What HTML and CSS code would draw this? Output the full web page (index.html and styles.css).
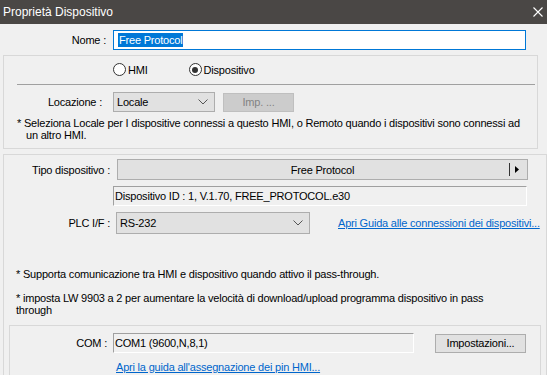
FILE: index.html
```html
<!DOCTYPE html>
<html lang="it">
<head>
  <meta charset="UTF-8">
  <title>Proprietà Dispositivo</title>
  <link rel="stylesheet" href="styles.css">
</head>
<body>
<div class="titlebar">
  <span>Proprietà Dispositivo</span>
  <svg class="close" width="10" height="10" viewBox="0 0 10 10"><path d="M0.5 0.5 L9.5 9.5 M9.5 0.5 L0.5 9.5" stroke="#fff" stroke-width="1.1"/></svg>
</div>

<div class="name-row">
  <label>Nome :</label>
  <div class="edit focus"><span class="sel">Free Protocol</span></div>
</div>

<div class="group g1">
  <div class="radios">
    <span class="radio"><i class="dot"></i>HMI</span>
    <span class="radio checked"><i class="dot"></i>Dispositivo</span>
  </div>
  <div class="sep"></div>
  <div class="row loc-row">
    <label class="loc-label">Locazione :</label>
    <div class="combo loc-combo">Locale<svg class="chev" width="10" height="6" viewBox="0 0 10 6"><path d="M0.5 0.5 L5 5 L9.5 0.5" fill="none" stroke="#555"/></svg></div>
    <div class="btn disabled">Imp. ...</div>
  </div>
  <p class="note">* Seleziona Locale per I dispositive connessi a questo HMI, o Remoto quando i dispositivi sono connessi ad<br><span class="indent">un altro HMI.</span></p>
</div>

<div class="group g2">
  <div class="row tipo-row">
    <label>Tipo dispositivo :</label>
    <div class="btn tipo">Free Protocol<span class="tsep"></span><svg class="arrow" width="4" height="7" viewBox="0 0 4 7"><path d="M0 0 L4 3.5 L0 7 Z" fill="#000"/></svg></div>
  </div>
  <div class="row id-row">
    <div class="edit readonly wide">Dispositivo ID : 1, V.1.70, FREE_PROTOCOL.e30</div>
  </div>
  <div class="row plc-row">
    <label>PLC I/F :</label>
    <div class="combo plc-combo">RS-232<svg class="chev" width="10" height="6" viewBox="0 0 10 6"><path d="M0.5 0.5 L5 5 L9.5 0.5" fill="none" stroke="#555"/></svg></div>
    <a class="link" href="#">Apri Guida alle connessioni dei dispositivi...</a>
  </div>
  <p class="note n1">* Supporta comunicazione tra HMI e dispositivo quando attivo il pass-through.</p>
  <p class="note n2">* imposta LW 9903 a 2 per aumentare la velocità di download/upload programma dispositivo in pass<br>through</p>

  <div class="group g3">
    <div class="row com-row">
      <label>COM :</label>
      <div class="edit readonly com">COM1 (9600,N,8,1)</div>
      <div class="btn imp">Impostazioni...</div>
    </div>
    <a class="link pin" href="#">Apri la guida all'assegnazione dei pin HMI...</a>
  </div>
</div>
</body>
</html>
```

FILE: styles.css
```css
body {
  margin: 0;
  background: #f0f0f0;
  font-family: "Liberation Sans", Arial, sans-serif;
  font-size: 11px;
  letter-spacing: -0.2px;
  color: #000;
  overflow: hidden;
  height: 375px;
}
.titlebar {
  height: 24px;
  background: #4a4745;
  color: #fff;
  font-size: 12px;
  letter-spacing: 0;
  display: flex;
  align-items: center;
  justify-content: space-between;
  padding: 0 4px 0 3px;
}
label {
  width: 106px;
  text-align: right;
  flex-shrink: 0;
}
.row {
  display: flex;
  align-items: center;
}
.name-row {
  display: flex;
  align-items: center;
  height: 30px;
  padding-top: 1px;
}
.edit {
  box-sizing: border-box;
  height: 20px;
  display: flex;
  align-items: center;
  white-space: nowrap;
}
.edit.focus {
  margin-left: 7px;
  width: 413px;
  background: #fff;
  border: 1px solid #0078d7;
  padding-left: 4px;
}
.sel {
  background: #0078d7;
  color: #fff;
  padding: 1px 1px;
}
.edit.readonly {
  background: #f0f0f0;
  border: 1px solid;
  border-color: #a0a0a0 #fff #fff #a0a0a0;
  padding-left: 1px;
}
.group {
  border: 1px solid #d8d8d8;
  box-sizing: border-box;
}
.g1 {
  margin: 0 9px 0 3px;
  height: 94px;
}
.radios {
  display: flex;
  height: 13px;
  margin-top: 7px;
  padding-left: 109px;
}
.radio {
  display: flex;
  align-items: center;
  gap: 2px;
  margin-right: 41px;
}
.radio.checked {
  margin-right: 0;
}
.dot {
  box-sizing: border-box;
  width: 13px;
  height: 13px;
  border: 1px solid #333;
  border-radius: 50%;
  background: #fff;
  position: relative;
}
.checked .dot::after {
  content: "";
  position: absolute;
  left: 2.5px;
  top: 2.5px;
  width: 6px;
  height: 6px;
  border-radius: 50%;
  background: #333;
}
.sep {
  height: 1px;
  background: #a0a0a0;
  margin: 8px 2px 0 13px;
}
.loc-row {
  margin-top: 7px;
}
.loc-label {
  width: 98px;
}
.combo {
  box-sizing: border-box;
  height: 20px;
  background: #e1e1e1;
  border: 1px solid #adadad;
  display: flex;
  align-items: center;
  justify-content: space-between;
  padding: 0 6px 0 3px;
}
.loc-combo {
  margin-left: 11px;
  width: 102px;
}
.btn {
  box-sizing: border-box;
  height: 19px;
  background: #e1e1e1;
  border: 1px solid #adadad;
  display: flex;
  align-items: center;
  justify-content: center;
}
.btn.disabled {
  margin-left: 8px;
  width: 71px;
  background: #cccccc;
  border-color: #bfbfbf;
  color: #838383;
}
.note {
  margin: 0;
  line-height: 12px;
  white-space: nowrap;
}
.g1 .note {
  margin: 5px 0 0 13px;
}
.indent {
  display: inline-block;
  padding-left: 9px;
}
.g2 {
  margin: 5px 0 0 3px;
  border-right: 1px solid #d8d8d8;
  height: 240px;
}
.tipo-row {
  margin-top: 4px;
}
.btn.tipo {
  margin-left: 7px;
  width: 411px;
  height: 21px;
  position: relative;
}
.tsep {
  position: absolute;
  right: 17px;
  top: 3px;
  width: 1px;
  height: 13px;
  background: #333;
}
.arrow {
  position: absolute;
  right: 8px;
  top: 6px;
}
.id-row {
  margin-top: 6px;
  padding-left: 109px;
}
.wide {
  width: 414px;
}
.plc-row {
  margin-top: 6px;
}
.plc-combo {
  margin-left: 6px;
  width: 194px;
  height: 22px;
}
.link {
  color: #0066cc;
  margin-left: 28px;
  white-space: nowrap;
}
.n1 {
  margin: 34px 0 0 12px;
}
.n2 {
  margin: 12px 0 0 12px;
}
.g3 {
  margin: 9px 5px 0 5px;
  height: 60px;
  border-right: 1px solid #d8d8d8;
}
.com-row {
  margin-top: 7px;
}
.com-row label {
  width: 97px;
}
.edit.com {
  margin-left: 6px;
  width: 301px;
}
.btn.imp {
  margin-left: 21px;
  width: 91px;
}
.pin {
  display: inline-block;
  margin: 8px 0 0 106px;
}
```
